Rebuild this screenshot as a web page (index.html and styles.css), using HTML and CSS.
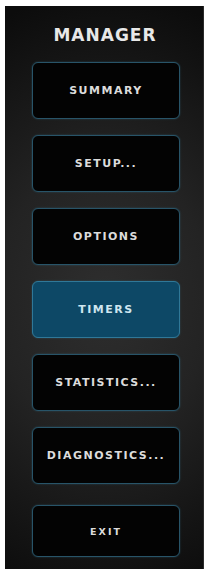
FILE: index.html
```html
<!DOCTYPE html>
<html>
<head>
<meta charset="utf-8">
<link rel="stylesheet" href="styles.css">
</head>
<body>
<div class="panel">
  <div class="title">MANAGER</div>
  <div class="menu">
    <div class="btn">SUMMARY</div>
    <div class="btn">SETUP...</div>
    <div class="btn">OPTIONS</div>
    <div class="btn active">TIMERS</div>
    <div class="btn">STATISTICS...</div>
    <div class="btn">DIAGNOSTICS...</div>
    <div class="btn exit">EXIT</div>
  </div>
</div>
</body>
</html>
```
FILE: styles.css
```css
html, body {
  margin: 0;
  padding: 0;
  background: #ffffff;
}
body {
  font-family: "DejaVu Sans", "Liberation Sans", sans-serif;
  font-weight: bold;
}
.panel {
  box-sizing: border-box;
  margin: 6px 0 0 5px;
  width: 199px;
  height: 563px;
  background: radial-gradient(ellipse 120% 55% at 50% 52%, #2e2e2e 0%, #232323 45%, #0c0c0c 100%);
  border-right: 1px solid #2a2a2a;
  padding-top: 21px;
}
.title {
  color: #e8e8e8;
  font-size: 17px;
  letter-spacing: 1px;
  text-align: center;
  line-height: 17px;
  padding-left: 2px;
}
.menu {
  margin: 18px 0 0 27px;
  width: 148px;
  display: flex;
  flex-direction: column;
  gap: 16px;
}
.btn {
  box-sizing: border-box;
  height: 57px;
  background: #030303;
  border: 1.5px solid #285468;
  border-radius: 6px;
  box-shadow: 0 0 2px rgba(60, 130, 160, 0.45);
  color: #dcdcdc;
  font-size: 11px;
  letter-spacing: 1.5px;
  display: flex;
  align-items: center;
  justify-content: center;
}
.btn.active {
  background: #0d4866;
  border-color: #2f7898;
  color: #cfe6f0;
}
.btn.exit {
  height: 52px;
  margin-top: 5px;
  font-size: 9.5px;
  letter-spacing: 2px;
}
```
